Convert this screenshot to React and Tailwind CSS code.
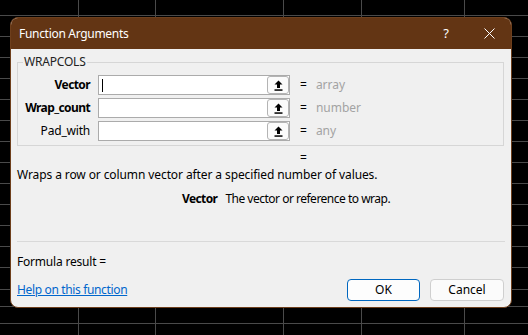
import React from 'react';

// grid lines of the sheet behind the dialog
const COLS = [78, 155, 283, 361, 464];
const ROWS = [15, 36, 57, 78, 99, 120, 141, 162, 183, 204, 225, 246, 267, 289, 306, 323];

const SheetGrid = () => (
  <svg className="absolute inset-0" width="528" height="335">
    {COLS.map((x) => <line key={'c' + x} x1={x + 0.5} y1="0" x2={x + 0.5} y2="335" stroke="#4a4a4a" strokeWidth="1" />)}
    {ROWS.map((y) => <line key={'r' + y} x1="0" y1={y + 0.5} x2="528" y2={y + 0.5} stroke="#4a4a4a" strokeWidth="1" />)}
  </svg>
);

const RefIcon = () => (
  <svg width="9" height="11" viewBox="0 0 9 11">
    <path d="M4.5 0.5 L8.5 4.5 L6 4.5 L6 8 L3 8 L3 4.5 L0.5 4.5 Z" fill="#000" />
    <rect x="0.5" y="9.3" width="8" height="1.5" fill="#000" />
  </svg>
);

const ArgRow = ({ label, bold, hint, cursor }) => (
  <div className="flex items-center h-[20px]">
    <div className={`w-[72px] text-right text-[12px] text-black ${bold ? 'font-bold tracking-[-0.6px]' : 'tracking-[-0.2px]'}`}>{label}</div>
    <div className="ml-[8px] w-[192px] h-[20px] border border-[#ababab] bg-white flex items-center justify-between">
      <div className="pl-[3px] flex items-center">
        {cursor && <div className="w-[1px] h-[13px] bg-black" />}
      </div>
      <div className="w-[22px] h-[18px] border border-[#b4b4b4] rounded-[3px] bg-[#fbfbfb] flex items-center justify-center">
        <RefIcon />
      </div>
    </div>
    <span className="ml-[10px] text-[12px] text-black">=</span>
    <span className="ml-[9px] text-[12px] text-[#a3a3a3]">{hint}</span>
  </div>
);

export default function App() {
  return (
    <div
      className="relative w-[528px] h-[335px] bg-black overflow-hidden"
      style={{ fontFamily: '"Noto Sans", "Open Sans", sans-serif' }}
    >
      <SheetGrid />

      {/* dialog window */}
      <div className="absolute left-[10px] top-[17px] w-[502px] h-[291px] rounded-[8px] border border-[#6e3f1c] bg-[#f0f0f0] flex flex-col overflow-hidden">
        <div className="h-[31px] bg-[#633514] flex items-center pl-[8px] shrink-0">
          <span className="text-white text-[12px] leading-none tracking-[-0.3px]">Function Arguments</span>
          <span className="ml-auto text-white text-[13px] leading-none mr-[35px]">?</span>
          <svg className="mr-[16px]" width="11" height="11" viewBox="0 0 11 11">
            <path d="M0.5 0.5 L10.5 10.5 M10.5 0.5 L0.5 10.5" stroke="#fff" strokeWidth="1" />
          </svg>
        </div>

        <div className="flex flex-col text-[12px] leading-[16px] text-black">
          {/* argument group */}
          <div className="relative mt-[13px] ml-[6px] w-[487px] h-[84px] border border-[#d6d6d6] pt-[12px] flex flex-col gap-[3px]">
            <span className="absolute -top-[9px] left-[5px] px-[1px] bg-[#f0f0f0] text-[12px] text-[#222] tracking-[-0.2px]">WRAPCOLS</span>
            <ArgRow label="Vector" bold hint="array" cursor />
            <ArgRow label="Wrap_count" bold hint="number" />
            <ArgRow label="Pad_with" hint="any" />
          </div>

          <div className="mt-[4px] ml-[289px]">=</div>
          <div className="mt-[1px] ml-[6px] tracking-[-0.1px]">Wraps a row or column vector after a specified number of values.</div>
          <div className="mt-[8px] ml-[171px] flex">
            <span className="font-bold tracking-[-0.6px]">Vector</span>
            <span className="ml-[8px] tracking-[-0.5px]">The vector or reference to wrap.</span>
          </div>

          <div className="mt-[34px] ml-[6px] w-[488px] h-[1px] bg-[#d9d9d9]" />

          <div className="mt-[12px] ml-[6px] tracking-[-0.2px]">Formula result =</div>

          <div className="mt-[9px] ml-[6px] mr-[7px] flex items-center">
            <a className="text-[#0066cc] underline tracking-[-0.35px]">Help on this function</a>
            <button className="ml-auto w-[73px] h-[22px] rounded-[4px] border border-[#0067c0] bg-[#fdfdfd] text-[12px] text-black">OK</button>
            <button className="ml-[10px] w-[74px] h-[22px] rounded-[4px] border border-[#cfcfcf] bg-[#fbfbfb] text-[12px] text-black">Cancel</button>
          </div>
        </div>
      </div>
    </div>
  );
}
